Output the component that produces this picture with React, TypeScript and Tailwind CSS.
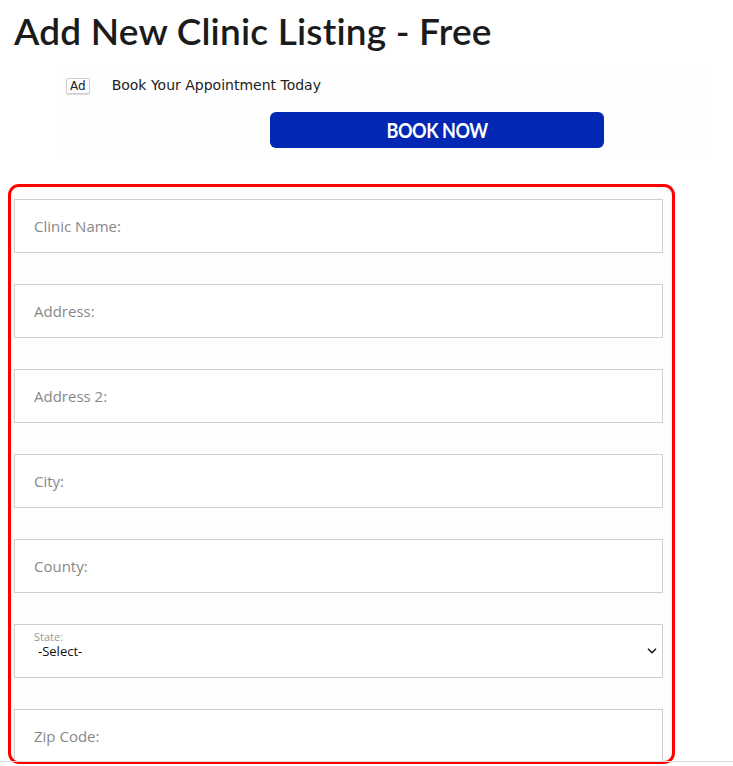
import { ChevronDown } from "lucide-react";

const fields = ["Clinic Name:", "Address:", "Address 2:", "City:", "County:"];

function TextField({ label }: { label: string }) {
  return (
    <div className="h-[54px] shrink-0 border border-[#cfcfcf] bg-white flex items-center pl-[19px] pb-[1px]">
      <span className="text-[15px] leading-[20px] text-[#888] font-['Open_Sans',sans-serif]">{label}</span>
    </div>
  );
}

export default function App() {
  return (
    <div className="w-[733px] h-[766px] bg-white overflow-hidden relative">
      <h1 className="pl-[14px] pt-[9px] text-[37px] leading-[44px] font-semibold text-[#1b1b1b] font-['Lato',sans-serif] tracking-[0.2px]">
        Add New Clinic Listing - Free
      </h1>

      {/* Ad block */}
      <div className="ml-[62px] mt-[16px] w-[643px] h-[91px] bg-[#fefefe]">
        <div className="flex items-center pt-[6px]">
          <span className="ml-[4px] px-[3px] h-[16px] leading-[14px] text-[12px] border border-[#d0d0d0] rounded-[2px] shadow-[0_1px_1px_rgba(0,0,0,0.15)] font-['DejaVu_Sans',sans-serif] text-[#222]">
            Ad
          </span>
          <span className="ml-[22px] text-[14px] text-[#222] font-['DejaVu_Sans',sans-serif]">
            Book Your Appointment Today
          </span>
        </div>
        <div className="ml-[208px] mt-[16px] w-[334px] h-[36px] rounded-[6px] bg-[#0227b3] flex items-center justify-center">
          <span className="inline-block scale-x-[0.9] text-white font-bold text-[20px] tracking-[-0.5px] font-['Lato',sans-serif]">
            BOOK NOW
          </span>
        </div>
      </div>

      {/* Form */}
      <div className="ml-[8px] mt-[24px] w-[667px] h-[580px] border-[3px] border-[#ff0000] rounded-[11px] bg-[#fdfdfd] pl-[3px] pr-[9px] pt-[12px] flex flex-col gap-[31px] overflow-hidden shadow-[inset_0_0_5px_rgba(0,0,0,0.04)]">
        {fields.map((f) => (
          <TextField key={f} label={f} />
        ))}
        <div className="h-[54px] shrink-0 border border-[#cfcfcf] bg-white flex flex-col pl-[19px] pr-[3px] pt-[6px] relative">
          <span className="text-[11px] leading-[12px] text-[#9a9a9a] font-['Open_Sans',sans-serif]">State:</span>
          <span className="ml-[4px] mt-[1px] text-[13px] leading-[15px] text-[#111] font-['Open_Sans',sans-serif]">-Select-</span>
          <ChevronDown className="absolute right-[3px] top-[19px] w-[14px] h-[14px] text-[#222]" strokeWidth={3} />
        </div>
        <TextField label="Zip Code:" />
      </div>
      <div className="absolute left-0 right-0 top-[761px] h-px bg-[#d9d9d9]" />
    </div>
  );
}
